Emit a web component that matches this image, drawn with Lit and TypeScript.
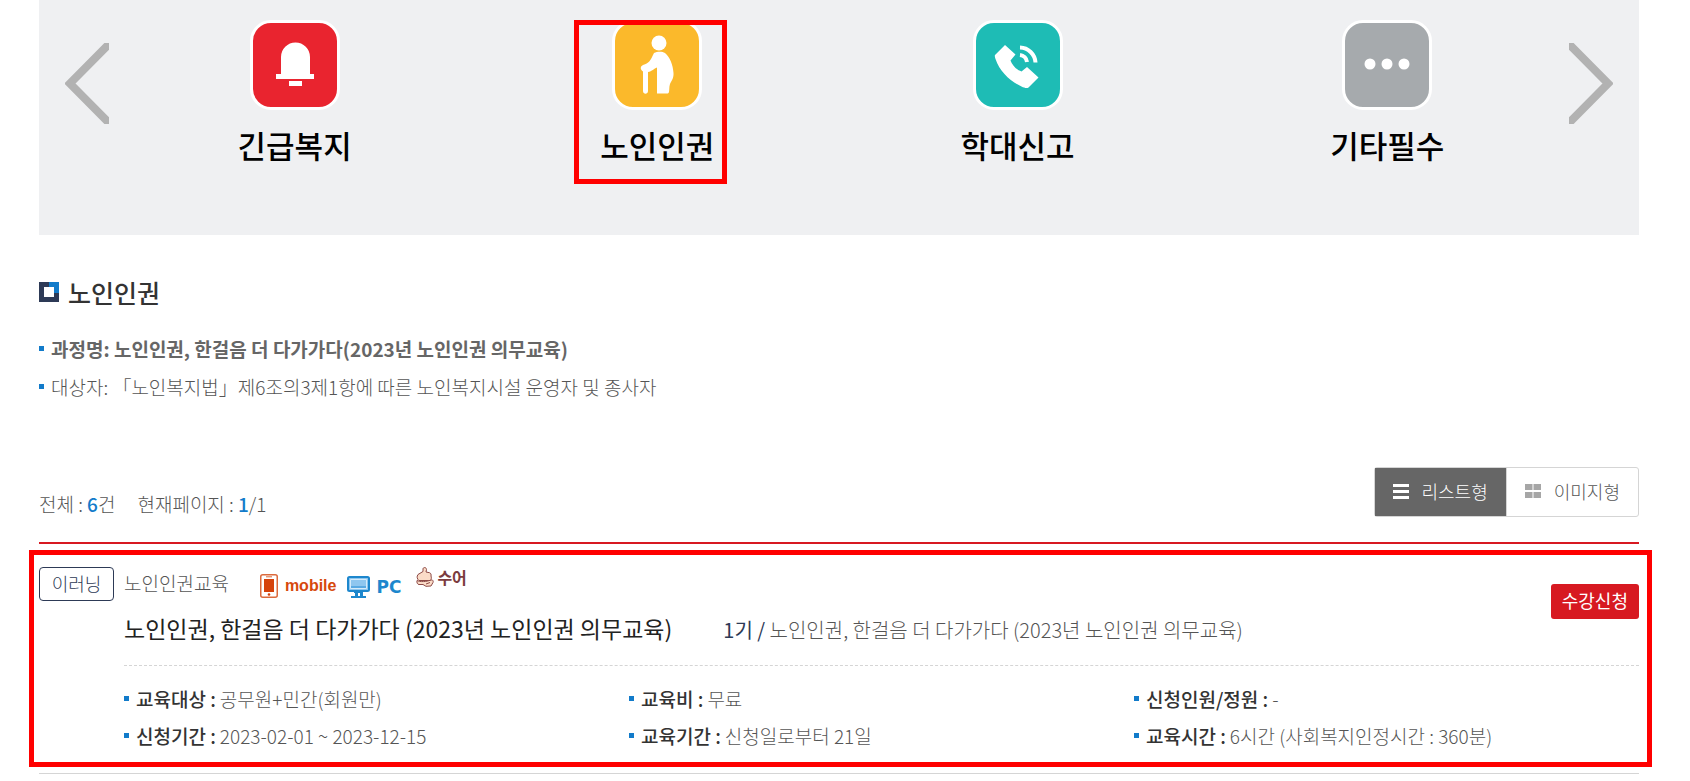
import { LitElement, html, css, svg } from "lit";
import { customElement, state } from "lit/decorators.js";
import { classMap } from "lit/directives/class-map.js";

const bell = svg`<path d="M28 51V34a14.500 14.500 0 0 1 29 0v17h4v5H23v-5z"/><path d="M36 58h13v5H36z"/>`;
const elder = svg`
  <circle cx="44" cy="20" r="7.500"/>
  <path d="M39 30c3-1.500 8-2 11 0 5 4 8 12 8.500 20 .3 5-1.500 7-3.500 11-1 3-.5 6-1 8-.4 1-1 1.500-2 1.500H42V44.500c-3 1-5 4-9 4.500v19c0 3.500-5 3.500-5 0V48.500c-3-2-3-5 0-6.500 6-2 7-3.500 11-12z"/>`;
const phone = svg`
  <path d="M19 32 29 22l10.500 9.500-5 6c1.500 4.500 6 9.500 11 11l5.500-4.500 11.500 10.500-10 10c-1.500 1-4 .5-7-1C34 58 24 49 19.500 36c-.5-1.500-1-3-.5-4z"/>
  <path d="M44 32a8 8 0 0 1 7 7M44 24.500A16 16 0 0 1 59.500 39.500" fill="none" stroke="#fff" stroke-width="4"/>`;
const dots = svg`<circle cx="25" cy="41" r="5.500"/><circle cx="42" cy="41" r="5.500"/><circle cx="59" cy="41" r="5.500"/>`;

const categories = [
  { name: "긴급복지", tone: "red", icon: bell },
  { name: "노인인권", tone: "amber", icon: elder },
  { name: "학대신고", tone: "teal", icon: phone },
  { name: "기타필수", tone: "gray", icon: dots },
];

const facts = [
  ["교육대상", "공무원+민간(회원만)"],
  ["교육비", "무료"],
  ["신청인원/정원", "-"],
  ["신청기간", "2023-02-01 ~ 2023-12-15"],
  ["교육기간", "신청일로부터 21일"],
  ["교육시간", "6시간 (사회복지인정시간 : 360분)"],
];

@customElement("app-root")
export class AppRoot extends LitElement {
  @state() private selected = 1;
  @state() private view = "list";

  static styles = css`
    :host {
      display: block;
      padding: 0 51px 0 39px;
      font-family: "Noto Sans CJK KR", sans-serif;
      font-size: 19px;
      font-weight: 300;
      line-height: 38px;
      color: #555;
      background: #fff;
    }
    * { box-sizing: border-box; }
    button { font: inherit; color: inherit; border: 0; padding: 0; background: none; cursor: pointer; }
    a { color: inherit; text-decoration: none; }
    svg { display: block; }
    h2, h3, p, ul, dl, dd { margin: 0; padding: 0; }
    ul { list-style: none; }

    .banner { display: flex; align-items: flex-start; padding: 20px 26px 66px; background: #eff0f2; }
    .arrow { margin-top: 23px; }
    .slides {
      flex: 1;
      display: grid;
      grid-template-columns: 355fr 330fr 350fr 349fr;
      column-gap: 20px;
      padding: 0 7px 0 8px;
    }
    .slide { position: relative; justify-self: center; display: flex; flex-direction: column; align-items: center; gap: 11px; }
    .tile { width: 90px; height: 90px; border: 3px solid #fff; border-radius: 21px; fill: #fff; }
    .red { background: #e9242f; }
    .amber { background: #fbb92b; }
    .teal { background: #1ebcb5; }
    .gray { background: #a6aaad; }
    .slide-name { font-size: 31px; line-height: 48px; font-weight: 500; color: #000; }
    .focus { position: absolute; border: 5px solid #f00; pointer-events: none; }
    .slide .focus { inset: 0 -13px -15px -26px; }

    .heading { display: flex; align-items: center; gap: 9px; margin-top: 38px; font-size: 25px; line-height: 38px; font-weight: 500; color: #333; }
    .intro { margin-top: 19px; }
    .bullet { position: relative; padding-left: 12px; }
    .bullet::before { content: ""; position: absolute; left: 0; top: 16px; width: 5px; height: 5px; background: #127bca; }
    .strong { font-weight: 700; color: #666; }

    .toolbar { display: flex; align-items: flex-start; justify-content: space-between; margin-top: 61px; padding-bottom: 19px; border-bottom: 2px solid #d71921; }
    .stats { display: flex; gap: 22px; padding-top: 18px; }
    .num { font-weight: 500; color: #127bca; }
    .views { display: flex; border: 1px solid #d5d5d5; border-radius: 3px; }
    .view { display: flex; align-items: center; gap: 13px; height: 48px; padding: 0 18px 2px; font-size: 18px; color: #555; fill: #a6a6a6; }
    .view + .view { border-left: 1px solid #d5d5d5; }
    .view.on { background: #666; color: #fff; fill: #fff; }

    .course { position: relative; display: grid; grid-template-columns: 75px 1fr; column-gap: 10px; padding: 23px 0 19px; border-bottom: 1px solid #d5d5d5; }
    .course > .focus { inset: 6px -13px 6px -10px; }
    .kind { height: 34px; border: 1px solid #2d3a56; border-radius: 4px; color: #2d3a56; font-size: 18px; line-height: 30px; text-align: center; }
    .top { display: flex; justify-content: space-between; padding-bottom: 16px; border-bottom: 1px dashed #d5d5d5; }
    .labels { display: flex; align-items: flex-start; height: 38px; line-height: 32px; }
    .formats { display: flex; align-items: flex-start; margin-left: 31px; line-height: 20px; }
    .format { display: flex; align-items: center; font-weight: 700; }
    .mobile { gap: 7px; margin-top: 7px; height: 24px; font-family: "Liberation Sans", sans-serif; font-size: 16px; color: #d6480c; }
    .pc { gap: 6px; margin: 9px 0 0 11px; height: 22px; font-family: "DejaVu Sans", sans-serif; font-size: 17px; color: #1d87cd; }
    .sign { gap: 3px; margin-left: 15px; height: 20px; font-size: 16px; color: #7b3b3e; }
    .titles { display: flex; align-items: baseline; gap: 51px; margin-top: 4px; }
    .title { font-size: 23px; line-height: 38px; font-weight: 400; color: #222; }
    .session { font-size: 20px; }
    .round { font-weight: 400; color: #2d3a56; }
    .apply { height: 35px; margin-top: 17px; padding: 0 11px 2px; border-radius: 3px; background: #d71921; color: #fff; font-size: 18px; line-height: 33px; font-weight: 400; }
    .facts { display: grid; grid-template-columns: repeat(3, 1fr); padding-top: 14px; }
    .fact { display: flex; gap: 4px; line-height: 37px; }
    .fact dt { font-weight: 500; color: #333; }
  `;

  private arrow(label: string, points: string) {
    return html`<button class="arrow" aria-label=${label}>
      <svg width="44" height="81" viewBox="0 0 44 81"><polyline points=${points} fill="none" stroke="#b2b2b2" stroke-width="8"/></svg>
    </button>`;
  }

  render() {
    return html`
      <nav class="banner" aria-label="교육 분야">
        ${this.arrow("이전", "46,-1 5,40.500 46,82")}
        <div class="slides">
          ${categories.map((c, i) => html`
            <button class="slide" @click=${() => (this.selected = i)}>
              <svg class="tile ${c.tone}" viewBox="0 0 84 84">${c.icon}</svg>
              <span class="slide-name">${c.name}</span>
              ${this.selected === i ? html`<span class="focus"></span>` : ""}
            </button>`)}
        </div>
        ${this.arrow("다음", "-2,-1 39,40.500 -2,82")}
      </nav>

      <section>
        <h2 class="heading">
          <svg width="20" height="20" viewBox="0 0 20 20"><path fill="#2d3a56" d="M0 0h20v20H0z"/><path fill="#127bca" d="M10 0h10v11H10z"/><path fill="#fff" d="M5 5h10v10H5z"/></svg>
          노인인권
        </h2>
        <ul class="intro">
          <li class="bullet strong">과정명: 노인인권, 한걸음 더 다가가다(2023년 노인인권 의무교육)</li>
          <li class="bullet">대상자: 「노인복지법」제6조의3제1항에 따른 노인복지시설 운영자 및 종사자</li>
        </ul>
      </section>

      <div class="toolbar">
        <div class="stats">
          <span>전체 : <span class="num">6</span>건</span>
          <span>현재페이지 : <span class="num">1</span>/1</span>
        </div>
        <div class="views">
          <button class=${classMap({ view: true, on: this.view === "list" })} @click=${() => (this.view = "list")}>
            <svg width="16" height="15" viewBox="0 0 16 15"><path d="M0 0h16v3H0zM0 6h16v3H0zM0 12h16v3H0z"/></svg>리스트형
          </button>
          <button class=${classMap({ view: true, on: this.view === "image" })} @click=${() => (this.view = "image")}>
            <svg width="16" height="14" viewBox="0 0 16 14"><path d="M0 0h7.500v6H0zM8.500 0H16v6H8.500zM0 8h7.500v6H0zM8.500 8H16v6H8.500z"/></svg>이미지형
          </button>
        </div>
      </div>

      <article class="course">
        <div class="kind">이러닝</div>
        <div>
          <div class="top">
            <div>
              <div class="labels">
                <span>노인인권교육</span>
                <div class="formats">
                  <span class="format mobile">
                    <svg width="18" height="24" viewBox="0 0 18 24"><rect x=".75" y=".75" width="16.500" height="22.500" rx="2" fill="#fff" stroke="#dc6a3c" stroke-width="1.500"/><path fill="#d6420a" d="M4 5h10v13H4z"/><path fill="#dc6a3c" d="M6 2.300h6v1H6z"/><circle cx="9" cy="20.500" r="1.300" fill="#d6420a"/></svg>mobile
                  </span>
                  <span class="format pc">
                    <svg width="23" height="22" viewBox="0 0 23 22"><rect x="1" y="1" width="21" height="14" rx="1.500" fill="#8fc6ef" stroke="#1d87cd" stroke-width="2"/><path fill="#5aa9e2" d="M4 10h15v2H4z"/><path fill="none" stroke="#d5ebfa" d="M3.500 3.500h16v9h-16z"/><path fill="#1d87cd" d="M7 15h9v2H7zM8 17h3v3H8zM13 17h3v3h-3zM4 20h15v2H4z"/></svg>PC
                  </span>
                  <span class="format sign">
                    <svg width="18" height="20" viewBox="0 0 18 20"><path fill="#fbdcc8" stroke="#8d4a46" stroke-linejoin="round" d="M2 7.500 7 4.500V2c0-2 3.500-2 3.500.5L10 5l3.500.7c1.500.5 1.800 2 1.500 3.300.5 1.500.5 3-.5 4.500H3C1 12 .5 9.500 2 7.500z"/><path fill="#fbdcc8" stroke="#8d4a46" stroke-linejoin="round" d="M1 13.500c3 1.500 6 1 8.500 1l6-1.500c1.500-.2 2 1.200 1.500 2.500l-2 3.500-5 .3-3-1.800H3c-1.500 0-2.500-2-2-4z"/><path fill="none" stroke="#8d4a46" d="M10 17l4-1.500"/></svg>수어
                  </span>
                </div>
              </div>
              <div class="titles">
                <h3 class="title"><a href="#course">노인인권, 한걸음 더 다가가다 (2023년 노인인권 의무교육)</a></h3>
                <p class="session"><span class="round">1기 /</span> 노인인권, 한걸음 더 다가가다 (2023년 노인인권 의무교육)</p>
              </div>
            </div>
            <button class="apply">수강신청</button>
          </div>
          <dl class="facts">
            ${facts.map(([k, v]) => html`<div class="fact bullet"><dt>${k} :</dt><dd>${v}</dd></div>`)}
          </dl>
        </div>
        <span class="focus"></span>
      </article>
    `;
  }
}
